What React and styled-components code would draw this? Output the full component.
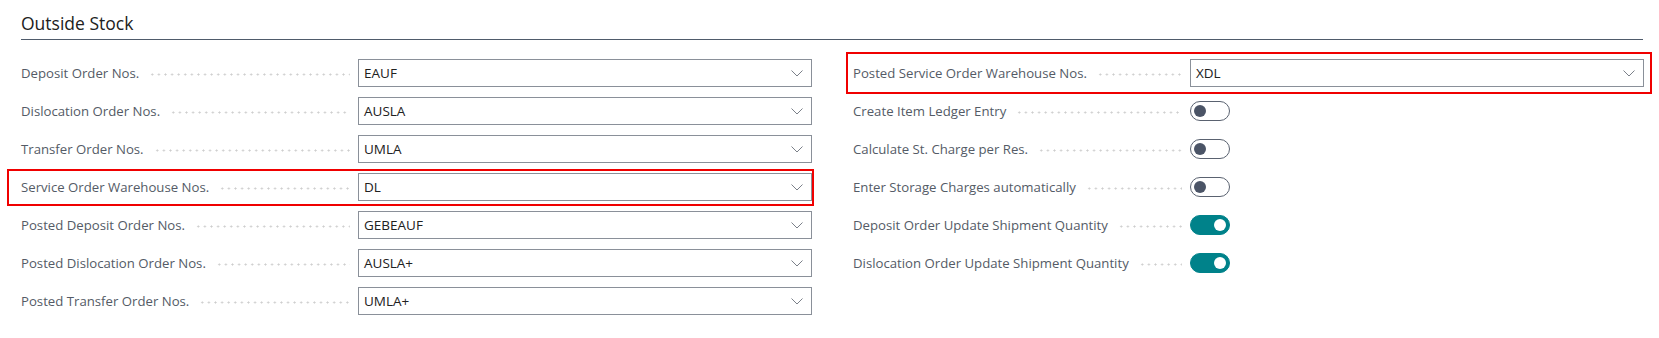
import React from "react";
import styled, { createGlobalStyle } from "styled-components";

const GlobalStyle = createGlobalStyle`
  body {
    margin: 0;
    background: #ffffff;
    font-family: "Open Sans", "Liberation Sans", sans-serif;
  }
`;

const Page = styled.div`
  padding: 0 16px 0 21px;
  width: 1622px;
`;

const Title = styled.h2`
  margin: 0;
  padding-top: 11px;
  height: 28px;
  font-size: 17.5px;
  font-weight: 400;
  color: #212121;
  border-bottom: 1px solid #4f5b6b;
`;

const Columns = styled.div`
  display: grid;
  grid-template-columns: 791px 791px;
  column-gap: 41px;
  padding-top: 14px;
`;

const Column = styled.div`
  display: flex;
  flex-direction: column;
`;

const Row = styled.div`
  position: relative;
  display: grid;
  grid-template-columns: 337px 454px;
  align-items: center;
  height: 38px;

  &::after {
    content: "";
    display: ${(p) => (p.$box ? "block" : "none")};
    position: absolute;
    top: ${(p) => p.$box?.[0]}px;
    right: ${(p) => p.$box?.[1]}px;
    bottom: ${(p) => p.$box?.[2]}px;
    left: ${(p) => p.$box?.[3]}px;
    border: 2px solid #f00000;
    pointer-events: none;
  }
`;

const Caption = styled.div`
  display: flex;
  align-items: center;
  min-width: 0;
`;

const Label = styled.span`
  font-size: 13.2px;
  color: #545b66;
  white-space: nowrap;
`;

const Leader = styled.span`
  flex: 1;
  height: 3px;
  margin: 3px 8px 0 10px;
  background-image: radial-gradient(circle, #cdcdcd 0.8px, transparent 1.3px);
  background-size: 6.6px 3px;
  background-repeat: repeat-x;
`;

const Select = styled.div`
  box-sizing: border-box;
  height: 28px;
  display: flex;
  align-items: center;
  justify-content: space-between;
  padding: 0 8px 0 5px;
  border: 1px solid #8a9099;
  background: #fff;
  font-size: 13.5px;
  color: #212121;
`;

const Chevron = () => (
  <svg width="12" height="7" viewBox="0 0 12 7" fill="none">
    <path d="M0.5 0.5 L6 6 L11.5 0.5" stroke="#7b8089" strokeWidth="1" />
  </svg>
);

const Switch = styled.div`
  box-sizing: border-box;
  width: 40px;
  height: 20px;
  border-radius: 10px;
  position: relative;
  border: 1px solid ${(p) => (p.$on ? "#00828a" : "#5a6270")};
  background: ${(p) => (p.$on ? "#00828a" : "#ffffff")};

  &::before {
    content: "";
    position: absolute;
    top: 3px;
    left: ${(p) => (p.$on ? "23px" : "3px")};
    width: 12px;
    height: 12px;
    border-radius: 50%;
    background: ${(p) => (p.$on ? "#ffffff" : "#4b5466")};
  }
`;

const left = [
  { label: "Deposit Order Nos.", value: "EAUF" },
  { label: "Dislocation Order Nos.", value: "AUSLA" },
  { label: "Transfer Order Nos.", value: "UMLA" },
  { label: "Service Order Warehouse Nos.", value: "DL", box: [1, -2, 0, -14] },
  { label: "Posted Deposit Order Nos.", value: "GEBEAUF" },
  { label: "Posted Dislocation Order Nos.", value: "AUSLA+" },
  { label: "Posted Transfer Order Nos.", value: "UMLA+" },
];

const right = [
  { label: "Posted Service Order Warehouse Nos.", value: "XDL", box: [-2, -8, -2, -7] },
  { label: "Create Item Ledger Entry", toggle: false },
  { label: "Calculate St. Charge per Res.", toggle: false },
  { label: "Enter Storage Charges automatically", toggle: false },
  { label: "Deposit Order Update Shipment Quantity", toggle: true },
  { label: "Dislocation Order Update Shipment Quantity", toggle: true },
];

function Field({ item }) {
  return (
    <Row $box={item.box}>
      <Caption>
        <Label>{item.label}</Label>
        <Leader />
      </Caption>
      {item.value !== undefined ? (
        <Select>
          <span>{item.value}</span>
          <Chevron />
        </Select>
      ) : (
        <Switch $on={item.toggle} />
      )}
    </Row>
  );
}

export default function App() {
  return (
    <>
      <GlobalStyle />
      <Page>
        <Title>Outside Stock</Title>
        <Columns>
          <Column>
            {left.map((item) => (
              <Field key={item.label} item={item} />
            ))}
          </Column>
          <Column>
            {right.map((item) => (
              <Field key={item.label} item={item} />
            ))}
          </Column>
        </Columns>
      </Page>
    </>
  );
}
